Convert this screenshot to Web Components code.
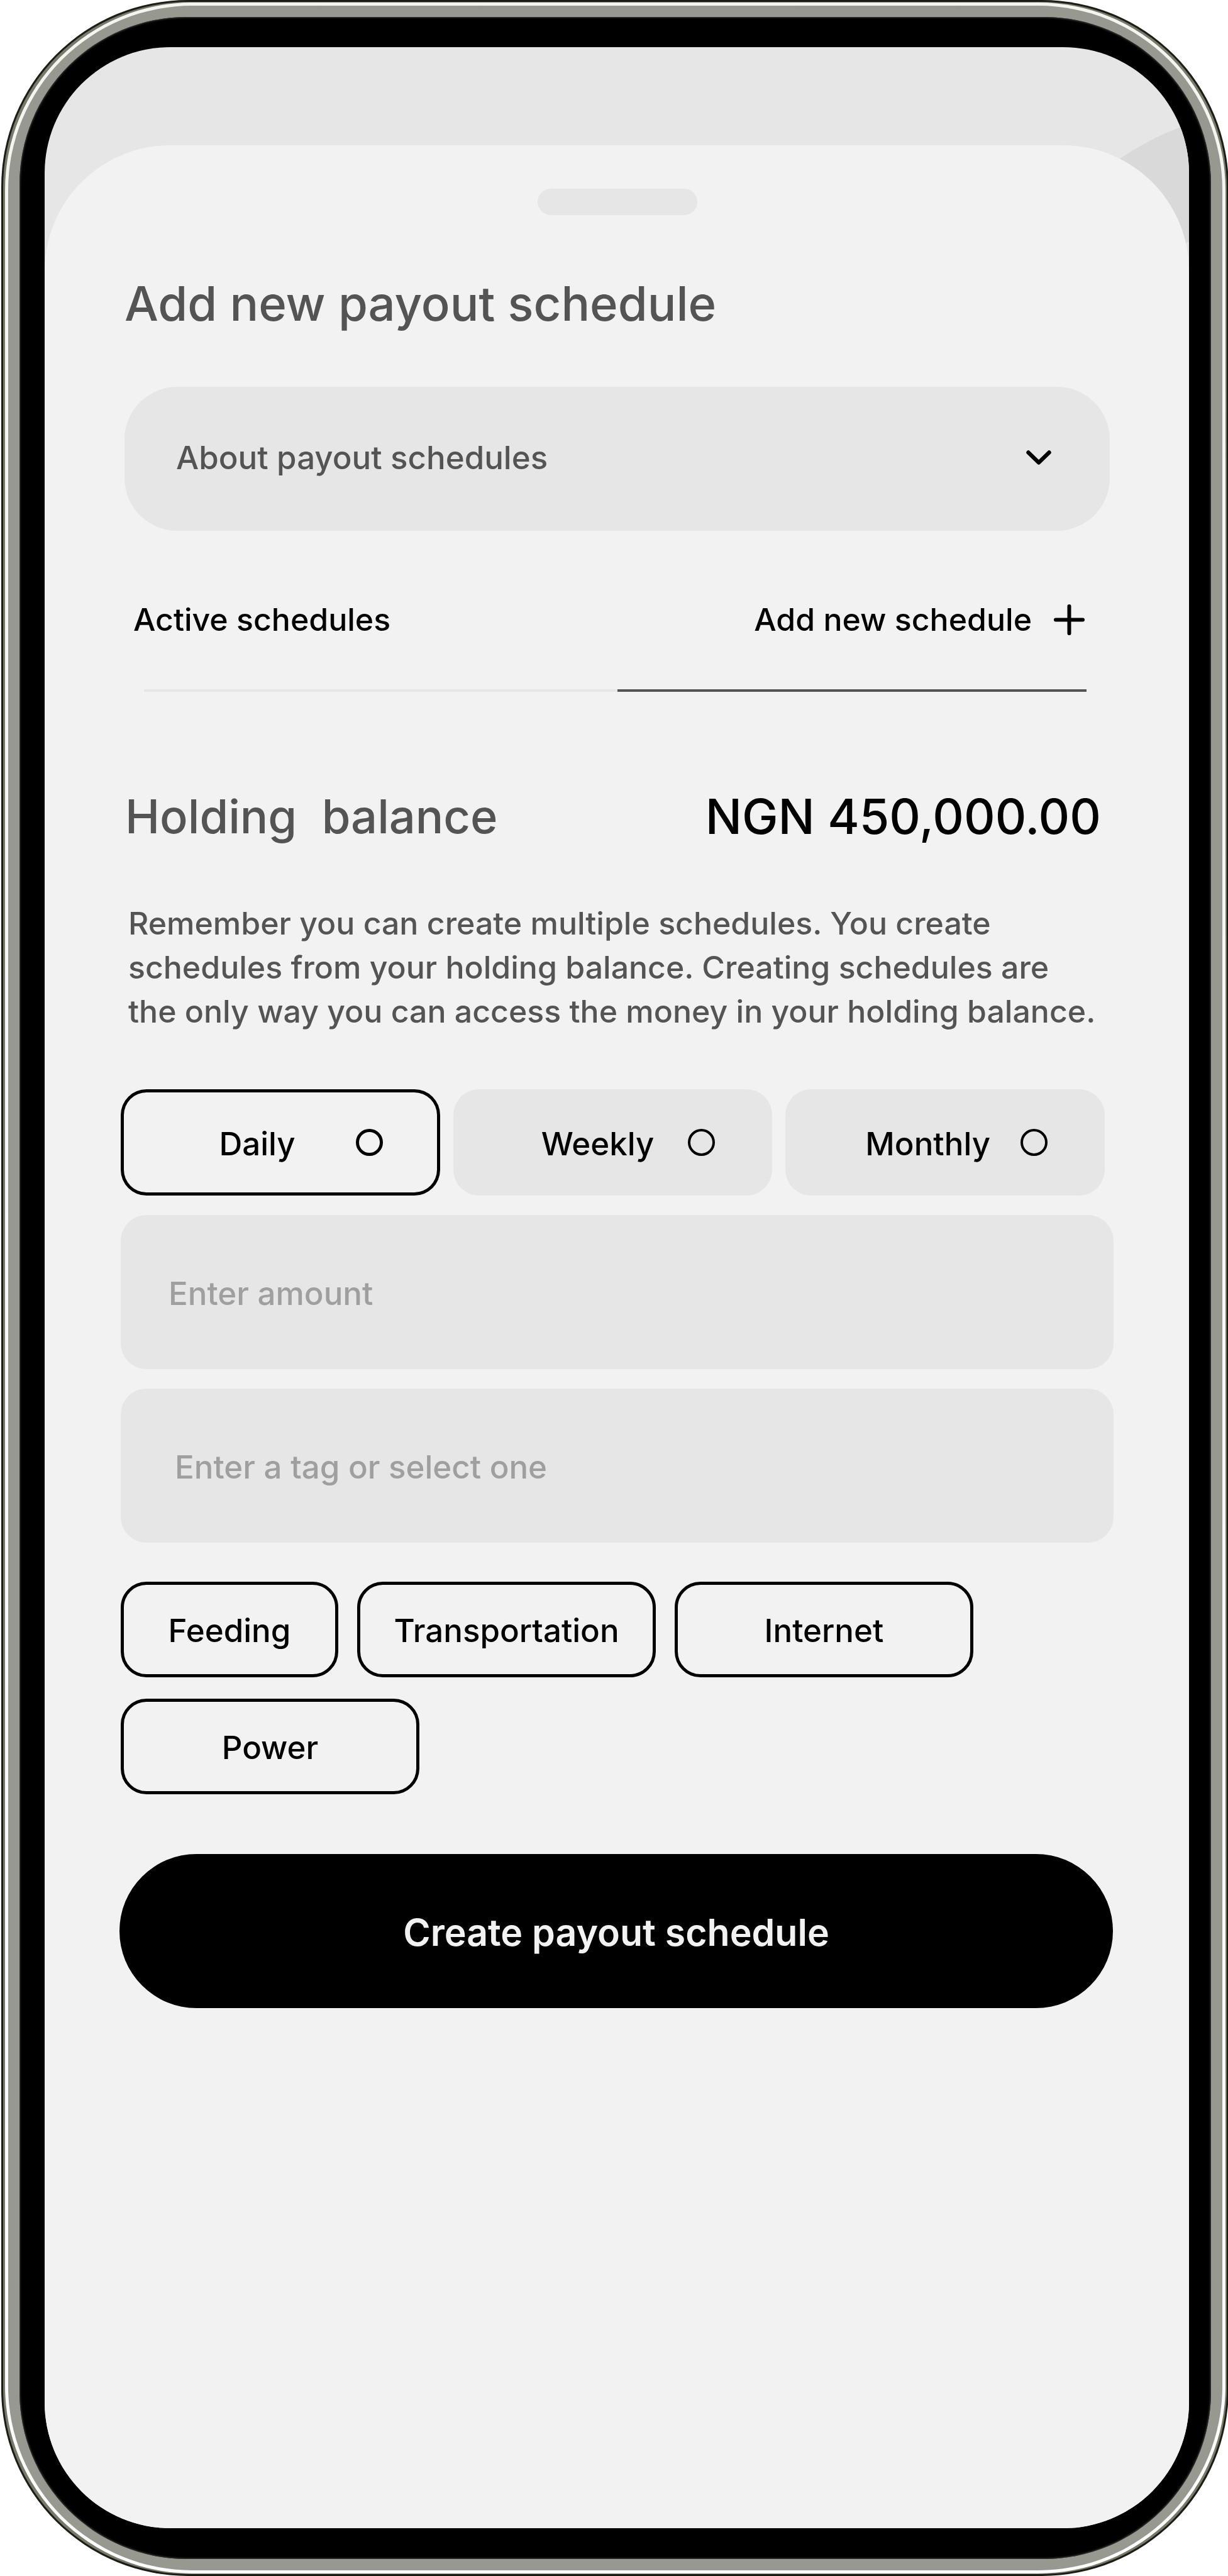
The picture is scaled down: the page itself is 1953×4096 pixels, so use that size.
<!DOCTYPE html>
<html lang="en">
<head>
<meta charset="utf-8">
<meta name="viewport" content="width=device-width, initial-scale=1">
<title>Add new payout schedule</title>
<style>
  :root {
    --ink: #000;
    --ink-soft: #545454;
    --ink-faint: #9f9f9f;
    --surface: #f2f2f2;
    --fill: #e6e6e6;
    --body: 51px;
    --body-tight: 50px;
    --title: 76px;
    --corner: 41px;
    --stroke: 5px;
  }
  body {
    margin: 0;
    background: #fff;
    overflow-x: hidden;
    font-family: Inter, "Liberation Sans", sans-serif;
    font-size: var(--body);
    font-weight: 500;
    color: var(--ink);
  }
</style>
</head>
<body>
<phone-frame>
  <bottom-sheet>
    <page-title>Add new payout schedule</page-title>
    <about-row>About payout schedules</about-row>
    <schedule-tabs>
      <span slot="active">Active schedules</span>
      <span slot="add">Add new schedule</span>
    </schedule-tabs>
    <balance-row>
      <span slot="label">Holding&nbsp; balance</span>
      <span slot="amount">NGN 450,000.00</span>
    </balance-row>
    <help-text>Remember you can create multiple schedules. You create<br>schedules from your holding balance. Creating schedules are<br>the only way you can access the money in your holding balance.</help-text>
    <payout-form></payout-form>
  </bottom-sheet>
</phone-frame>

<script>
const define = (name, html, setup) => {
  const template = document.createElement('template');
  template.innerHTML = '<style>*,*::before{box-sizing:border-box}:host{display:block;box-sizing:border-box}button,input{font:inherit;color:inherit;margin:0}</style>' + html;
  customElements.define(name, class extends HTMLElement {
    constructor() {
      super();
      this.attachShadow({ mode: 'open' }).append(template.content.cloneNode(true));
    }
    connectedCallback() { if (setup) setup(this, this.shadowRoot); }
  });
};

/* Device body: dark edge, olive bevel, highlight, metal band, black bezel, screen */
define('phone-frame', `
<style>
  :host, div { display: flex; flex-direction: column; }
  :host { min-height: 100vh; padding-left: 2px; margin-right: -1px; }
  div { flex: 1; }
  .edge { background: #1b1c16; padding: 3px; border-radius: 297px; }
  .bevel { background: #77796a; padding: 1px 2px 1px 3px; border-radius: 294px; }
  .shine { background: linear-gradient(#f4f5f0, #fcfcfc); padding: 5px; border-radius: 298px; }
  .metal { background: #979890; padding: 18px; border-radius: 293px; }
  .bezel { background: #000; padding: 48px 35px 49px 40px; border-radius: 266px; box-shadow: inset 0 0 3px 1px #444; }
  .screen { position: relative; background: var(--fill); border-radius: 200px; overflow: hidden; padding-top: 156px; }
  svg { position: absolute; top: 0; right: 0; width: 221px; height: 400px; }
  ::slotted(*) { flex: 1; }
</style>
<div class="edge"><div class="bevel"><div class="shine"><div class="metal"><div class="bezel">
  <div class="screen">
    <svg viewBox="0 0 221 400" aria-hidden="true"><path fill="#d9d9d9" d="M40 225 107 180Q155 147 205 128L221 121V309L213 313 140 360Z"/></svg>
    <slot></slot>
  </div>
</div></div></div></div></div>`);

define('bottom-sheet', `
<style>
  :host { position: relative; background: var(--surface); border-radius: 200px 200px 0 0; padding: 69px 120px 69px 121px; }
  .handle { width: 254px; height: 42px; border-radius: 21px; background: var(--fill); margin: 0 auto 95px; }
</style>
<div class="handle"></div>
<slot></slot>`);

define('page-title', `
<style>
  :host { margin: 0 6px 88px; }
  h1 { margin: 0; font-size: var(--title); line-height: 90px; font-weight: 500; color: var(--ink-soft); }
</style>
<h1><slot></slot></h1>`);

define('about-row', `
<style>
  :host { margin: 0 6px; }
  button { display: flex; align-items: center; justify-content: space-between; width: 100%; height: 229px;
    padding: 0 93px 4px 82px; border: 0; border-radius: 84px; background: var(--fill); color: var(--ink-soft); }
  svg { width: 40px; height: 25px; }
</style>
<button type="button" aria-expanded="false">
  <span><slot></slot></span>
  <svg viewBox="0 0 40 25" fill="none" stroke="#000" stroke-width="6.400" stroke-linecap="round" stroke-linejoin="round" aria-hidden="true"><path d="M3.500 4.500 20 20.500 36.500 4.500"/></svg>
</button>`);

define('schedule-tabs', `
<style>
  :host { margin-top: 109px; font-size: var(--body-tight); }
  .tabs { display: flex; justify-content: space-between; padding: 0 46px 0 20px; }
  button { display: flex; align-items: center; gap: 35px; height: 64px; padding: 0; border: 0; background: none; line-height: 64px; }
  svg { width: 49px; height: 49px; }
  .track { display: flex; height: 4px; margin: 79px 43px 0 37px; }
  .track i { flex: 753; background: var(--fill); }
  .track i + i { flex: 747; background: var(--ink-soft); }
</style>
<div class="tabs" role="tablist">
  <button type="button" role="tab" aria-selected="false"><slot name="active"></slot></button>
  <button type="button" role="tab" aria-selected="true"><slot name="add"></slot>
    <svg viewBox="0 0 49 49" fill="none" stroke="#000" stroke-width="6" stroke-linecap="round" aria-hidden="true"><path d="M24.500 3V46M3 24.500H46"/></svg>
  </button>
</div>
<div class="track"><i></i><i></i></div>`);

define('balance-row', `
<style>
  :host { display: flex; justify-content: space-between; margin: 153px 20px 90px 7px; font-size: 77px; line-height: 90px; }
  .label { color: var(--ink-soft); font-size: 74px; }
</style>
<span class="label"><slot name="label"></slot></span>
<slot name="amount"></slot>`);

define('help-text', `
<style>
  :host { margin: 0 12px 89px; }
  p { margin: 0; font-size: var(--body-tight); line-height: 70px; color: var(--ink-soft); white-space: nowrap; }
</style>
<p><slot></slot></p>`);

define('frequency-picker', `
<style>
  fieldset { display: grid; grid-template-columns: repeat(3, 1fr); gap: 21px; margin: 0 14px 0 0; padding: 0; border: 0; min-width: 0; }
  label { display: flex; align-items: center; justify-content: flex-end; height: 169px; padding-right: 91px;
    border-radius: var(--corner); background: var(--fill); }
  label:has(:checked) { background: none; box-shadow: inset 0 0 0 var(--stroke) var(--ink); }
  span { padding-top: 4px; }
  input { appearance: none; width: 43px; height: 43px; border: 4px solid var(--ink); border-radius: 50%; }
  input:checked { border-width: var(--stroke); }
  .daily { gap: 96px; } .weekly { gap: 54px; } .monthly { gap: 48px; }
</style>
<fieldset aria-label="Frequency">
  <label class="daily"><span>Daily</span><input type="radio" name="frequency" value="daily" checked></label>
  <label class="weekly"><span>Weekly</span><input type="radio" name="frequency" value="weekly"></label>
  <label class="monthly"><span>Monthly</span><input type="radio" name="frequency" value="monthly"></label>
</fieldset>`);

define('text-field', `
<style>
  :host { margin-top: 31px; }
  input { display: block; width: 100%; height: 245px; padding: 4px 78px 0 var(--indent, 76px); border: 0; outline: 0;
    border-radius: var(--corner); background: var(--fill); }
  input::placeholder { color: var(--ink-faint); opacity: 1; }
</style>
<input type="text">`, (host, root) => {
  const input = root.querySelector('input');
  input.placeholder = host.getAttribute('placeholder');
  input.setAttribute('aria-label', host.getAttribute('placeholder'));
});

define('tag-chip', `
<style>
  button { width: 475px; height: 152px; padding: 2px 0 0; border: var(--stroke) solid var(--ink);
    border-radius: var(--corner); background: none; }
  :host([compact]) button { width: 346px; }
</style>
<button type="button"><slot></slot></button>`);

define('primary-button', `
<style>
  :host { margin: 0 1px 0 -2px; }
  button { width: 100%; height: 245px; padding: 4px 0 0; border: 0; border-radius: 123px; background: var(--ink);
    color: var(--surface); font-size: 59px; font-weight: 600; }
</style>
<button type="submit"><slot></slot></button>`);

define('payout-form', `
<style>
  form { margin: 0; }
  .tags { display: flex; flex-wrap: wrap; gap: 34px 30px; margin: 62px 0 95px; }
  .wide { --indent: 86px; }
</style>
<form>
  <frequency-picker></frequency-picker>
  <text-field placeholder="Enter amount"></text-field>
  <text-field class="wide" placeholder="Enter a tag or select one"></text-field>
  <div class="tags">
    <tag-chip compact>Feeding</tag-chip>
    <tag-chip>Transportation</tag-chip>
    <tag-chip>Internet</tag-chip>
    <tag-chip>Power</tag-chip>
  </div>
  <primary-button>Create payout schedule</primary-button>
</form>`);
</script>
</body>
</html>
